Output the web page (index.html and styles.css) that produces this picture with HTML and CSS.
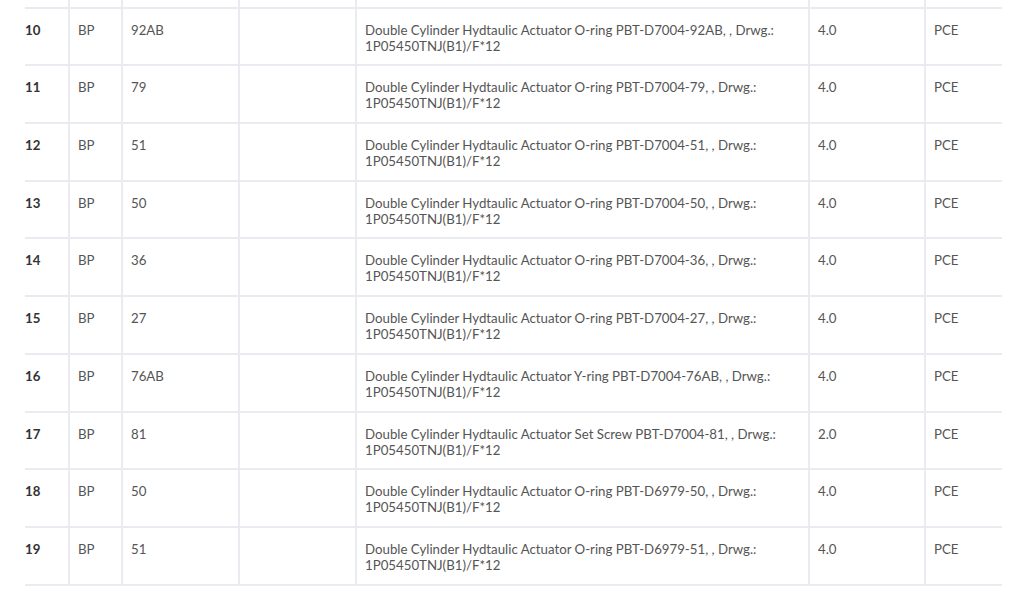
FILE: index.html
```html
<!DOCTYPE html>
<html>
<head>
    <meta charset="utf-8">
    <title>Parts list</title>
    <link rel="stylesheet" href="styles.css">
</head>
<body>
    <div class="content">
        <table class="table">
            <colgroup>
                <col class="c-no">
                <col class="c-type">
                <col class="c-pos">
                <col class="c-ref">
                <col class="c-desc">
                <col class="c-qty">
                <col class="c-unit">
            </colgroup>
            <!-- row 9 is scrolled out of view, only its bottom edge shows -->
            <tr class="scrolled">
                <td class="no"></td><td></td><td></td><td></td><td></td><td></td><td></td>
            </tr>
            <tr>
                <td class="no">10</td><td>BP</td><td>92AB</td><td></td>
                <td>Double Cylinder Hydtaulic Actuator O-ring PBT-D7004-92AB, , Drwg.: 1P05450TNJ(B1)/F*12</td>
                <td>4.0</td><td>PCE</td>
            </tr>
            <tr>
                <td class="no">11</td><td>BP</td><td>79</td><td></td>
                <td>Double Cylinder Hydtaulic Actuator O-ring PBT-D7004-79, , Drwg.: 1P05450TNJ(B1)/F*12</td>
                <td>4.0</td><td>PCE</td>
            </tr>
            <tr>
                <td class="no">12</td><td>BP</td><td>51</td><td></td>
                <td>Double Cylinder Hydtaulic Actuator O-ring PBT-D7004-51, , Drwg.: 1P05450TNJ(B1)/F*12</td>
                <td>4.0</td><td>PCE</td>
            </tr>
            <tr>
                <td class="no">13</td><td>BP</td><td>50</td><td></td>
                <td>Double Cylinder Hydtaulic Actuator O-ring PBT-D7004-50, , Drwg.: 1P05450TNJ(B1)/F*12</td>
                <td>4.0</td><td>PCE</td>
            </tr>
            <tr>
                <td class="no">14</td><td>BP</td><td>36</td><td></td>
                <td>Double Cylinder Hydtaulic Actuator O-ring PBT-D7004-36, , Drwg.: 1P05450TNJ(B1)/F*12</td>
                <td>4.0</td><td>PCE</td>
            </tr>
            <tr>
                <td class="no">15</td><td>BP</td><td>27</td><td></td>
                <td>Double Cylinder Hydtaulic Actuator O-ring PBT-D7004-27, , Drwg.: 1P05450TNJ(B1)/F*12</td>
                <td>4.0</td><td>PCE</td>
            </tr>
            <tr>
                <td class="no">16</td><td>BP</td><td>76AB</td><td></td>
                <td>Double Cylinder Hydtaulic Actuator Y-ring PBT-D7004-76AB, , Drwg.: 1P05450TNJ(B1)/F*12</td>
                <td>4.0</td><td>PCE</td>
            </tr>
            <tr>
                <td class="no">17</td><td>BP</td><td>81</td><td></td>
                <td>Double Cylinder Hydtaulic Actuator Set Screw PBT-D7004-81, , Drwg.: 1P05450TNJ(B1)/F*12</td>
                <td>2.0</td><td>PCE</td>
            </tr>
            <tr>
                <td class="no">18</td><td>BP</td><td>50</td><td></td>
                <td>Double Cylinder Hydtaulic Actuator O-ring PBT-D6979-50, , Drwg.: 1P05450TNJ(B1)/F*12</td>
                <td>4.0</td><td>PCE</td>
            </tr>
            <tr>
                <td class="no">19</td><td>BP</td><td>51</td><td></td>
                <td>Double Cylinder Hydtaulic Actuator O-ring PBT-D6979-51, , Drwg.: 1P05450TNJ(B1)/F*12</td>
                <td>4.0</td><td>PCE</td>
            </tr>
        </table>
    </div>
</body>
</html>
```

FILE: styles.css
```css
html,
body {
    background: #fff;
    padding: 0;
    border: 0;
    margin: 0;
    height: 100%;
    overflow: hidden;
}

.content {
    /* page is scrolled: row 9 sits above the fold */
    margin-top: -49px;
    padding: 0 22px 0 25px;
}

.table {
    width: 977px;
    table-layout: fixed;
    border-collapse: separate;
    border-spacing: 0;
    font-family: Lato, "Open Sans", "Liberation Sans", sans-serif;
    font-size: 13.25px;
    line-height: 16px;
    color: #555;
}

.c-no { width: 43px; }
.c-type { width: 53px; }
.c-pos { width: 117px; }
.c-ref { width: 117px; }
.c-desc { width: 453px; }
.c-qty { width: 116px; }
.c-unit { width: 78px; }

.table td {
    vertical-align: top;
    padding: 13px 10px 10.7px 8px;
    border-left: 2px solid #eaebf0;
    border-bottom: 2px solid #eaebf0;
    height: 32px;
}

.table td.no {
    padding-left: 0;
    border-left: 0;
    font-weight: bold;
    color: #333;
}
```
